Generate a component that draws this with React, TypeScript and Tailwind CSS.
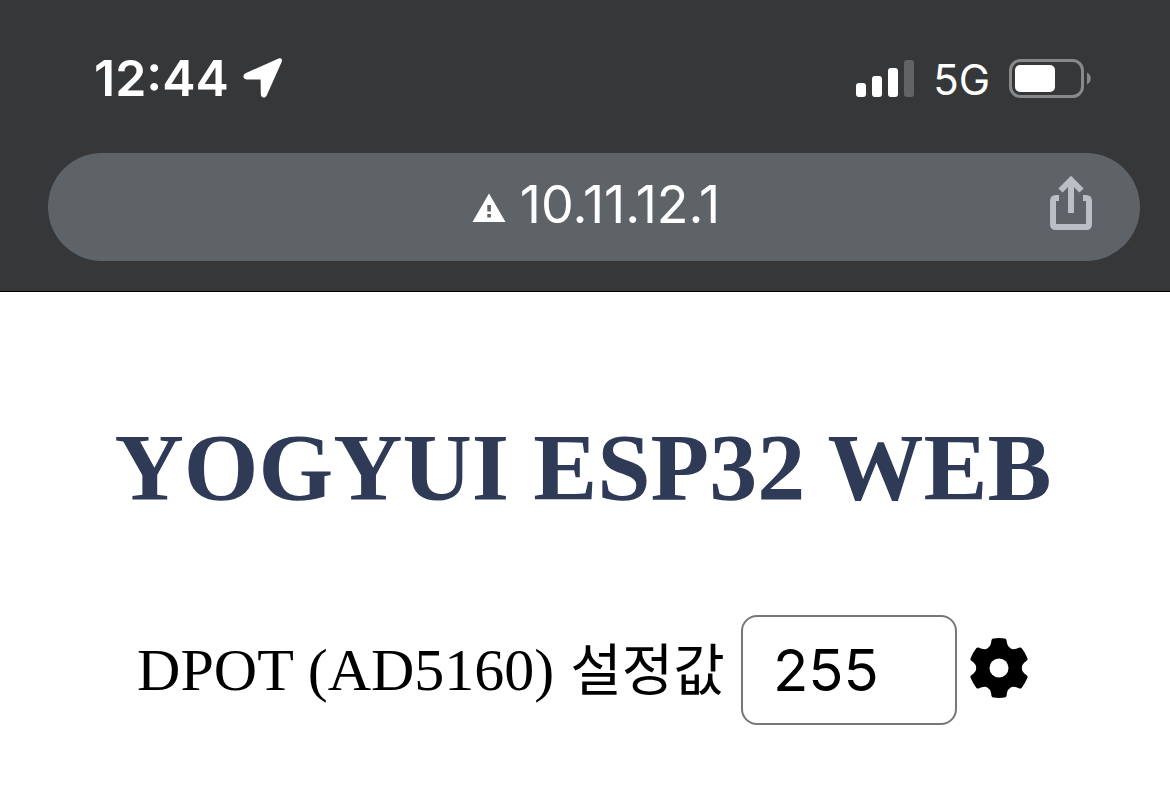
import React from 'react';

function LocationArrow() {
  return (
    <svg className="h-10 w-10" viewBox="0 0 40 40" fill="#fff" aria-hidden="true">
      <path d="M35.6 0.6 L3 15 C-0.8 16.8 -0.2 21.4 3.6 21.4 L17.6 21.4 L17.8 36 C17.8 40.2 22.2 40.6 23.8 37.2 L38.4 4.4 C39.8 1.4 38.4 -0.6 35.6 0.6 Z" />
    </svg>
  );
}

function SignalBars() {
  return (
    <svg className="h-[37px] w-[58px]" viewBox="0 0 58 37" fill="#fff" role="img" aria-label="Signal strength">
      <rect x="0" y="23" width="10" height="14" rx="3" />
      <rect x="16" y="16" width="10" height="21" rx="3" />
      <rect x="32" y="8" width="10" height="29" rx="3" />
      <rect x="48" y="0" width="10" height="37" rx="3" fill="#626365" />
    </svg>
  );
}

function Battery() {
  return (
    <svg className="h-[39px] w-[82px]" viewBox="0 0 82 39" role="img" aria-label="Battery">
      <rect x="1.5" y="1.5" width="72" height="36" rx="10" fill="none" stroke="#88898b" strokeWidth="3" />
      <rect x="6" y="6" width="40" height="27" rx="5" fill="#fff" />
      <path d="M78 13.5 C83 16 83 23 78 25.5 Z" fill="#88898b" />
    </svg>
  );
}

function WarningTriangle() {
  return (
    <svg className="mt-1 h-[29px] w-[34px]" viewBox="0 0 34 29" role="img" aria-label="Not secure">
      <path d="M17 0.5 L33.5 29 L0.5 29 Z" fill="#fff" />
      <path d="M15.3 12 h3.6 v6.5 h-3.6 Z M15.3 21 h3.6 v3.6 h-3.6 Z" fill="#5e6367" />
    </svg>
  );
}

function ShareIcon() {
  return (
    <svg className="h-[54px] w-[42px]" viewBox="0 0 42 54" fill="none" stroke="#babfc5" strokeWidth="6" aria-hidden="true">
      <path d="M9 22 H6 Q3 22 3 25 V48 Q3 51 6 51 H36 Q39 51 39 48 V25 Q39 22 36 22 H33" />
      <path d="M21 37 V5" />
      <path d="M10.5 14.5 L21 4 L31.5 14.5" />
    </svg>
  );
}

const toothAngles = [0, 60, 120, 180, 240, 300];

function Gear() {
  return (
    <svg className="h-[60px] w-[60px]" viewBox="-90 -90 180 180" aria-hidden="true">
      {toothAngles.map((angle) => (
        <path
          key={angle}
          transform={`rotate(${angle})`}
          d="M0 0 L-34 -59 Q-26 -63.6 -24 -74 L-22.5 -84 Q-21.5 -88 -17 -88.6 Q0 -91 17 -88.6 Q21.5 -88 22.5 -84 L24 -74 Q26 -63.6 34 -59 Z"
        />
      ))}
      <circle r="67" />
      <circle r="28.5" fill="#fff" />
    </svg>
  );
}

export default function App() {
  return (
    <div className="min-h-screen bg-white">
      <header className="border-b border-black bg-[#363739] pr-[30px] pb-[30px] pl-12 font-['Inter',sans-serif] text-white">
        <div className="flex items-center justify-between pt-12 pr-[49px] pb-[45px] pl-[46px]">
          <div className="flex items-center gap-3.5">
            <span className="text-[50px] leading-[60px] font-semibold">12:44</span>
            <LocationArrow />
          </div>
          <div className="flex items-center gap-[19px]">
            <SignalBars />
            <span className="pt-1 text-[42px] leading-[56px]">5G</span>
            <Battery />
          </div>
        </div>
        <div className="grid h-[108px] grid-cols-[1fr_auto_1fr] items-center rounded-full bg-[#5e6367] px-12 pb-1">
          <a href="#" className="col-start-2 flex items-center gap-3.5 pl-1">
            <WarningTriangle />
            <span className="text-[52px] leading-[60px]">10.11.12.1</span>
          </a>
          <button type="button" aria-label="Share" className="justify-self-end pb-1">
            <ShareIcon />
          </button>
        </div>
      </header>
      <main className="pt-[120px] pr-5 pl-4 text-center font-['Liberation_Serif','Noto_Sans_CJK_KR',serif]">
        <h1 className="text-[96px] leading-[112px] font-bold text-[#2e3a56]">YOGYUI ESP32 WEB</h1>
        <form className="mt-[91px] flex items-center justify-center gap-3 text-black">
          <label htmlFor="dpot" className="flex items-baseline gap-4 pr-1 pb-1 text-[60px] leading-[72px] whitespace-nowrap">
            <span>DPOT (AD5160)</span>
            <span className="font-['Noto_Sans_CJK_KR',sans-serif] text-[56px]">설정값</span>
          </label>
          <input
            id="dpot"
            type="text"
            inputMode="numeric"
            defaultValue="255"
            className="h-[110px] w-[216px] rounded-2xl border-2 border-[#77777b] bg-white px-[30px] font-['Inter',sans-serif] text-[58px]"
          />
          <button type="button" aria-label="Apply setting" className="pb-1">
            <Gear />
          </button>
        </form>
      </main>
    </div>
  );
}
